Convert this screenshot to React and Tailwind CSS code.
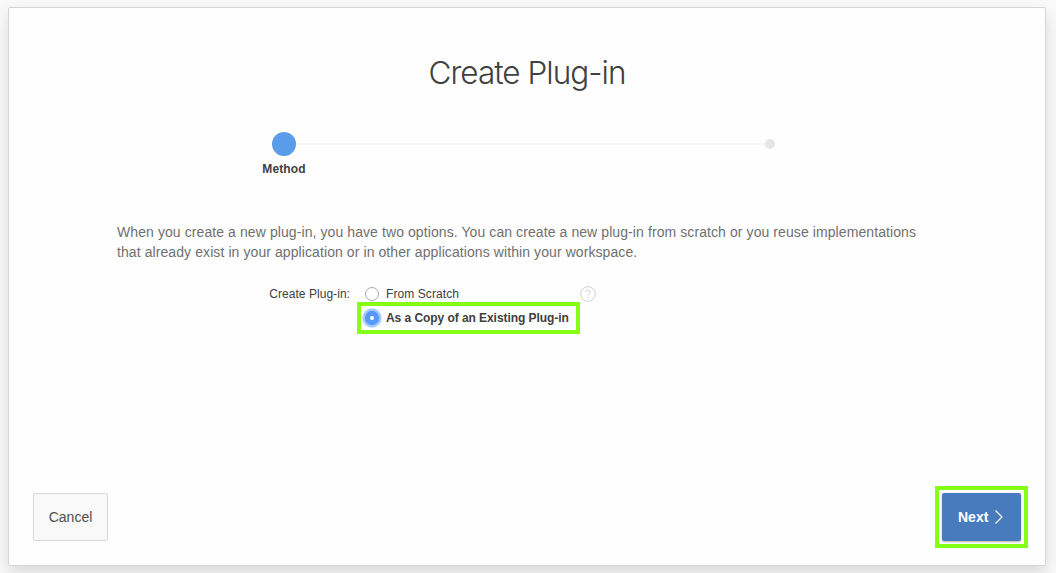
import React from 'react';

function Steps() {
  return (
    <div className="ml-[263px] mt-[38px] flex h-6 w-[503px] items-center">
      <span className="size-6 shrink-0 rounded-full bg-[#5a9bea]" />
      <span className="h-0.5 flex-1 bg-[#f7f7f7]" />
      <span className="size-2.5 shrink-0 rounded-full bg-[#e6e6e6]" />
    </div>
  );
}

function Option({ label, checked }) {
  return (
    <label className={checked
      ? 'flex h-8 w-[223px] items-center border-4 border-[#86ff17] pl-px text-xs font-bold tracking-[-0.06px]'
      : 'flex h-4 items-center pl-[5px] text-xs tracking-[0.08px]'}>
      {checked ? (
        <svg className="mr-1 size-5 shrink-0" viewBox="0 0 20 20">
          <circle cx="10" cy="10" r="9.7" fill="#a5cdfb" />
          <circle cx="10" cy="10" r="7.2" fill="#5897fb" />
          <circle cx="10" cy="10" r="2" fill="#fff" />
        </svg>
      ) : (
        <svg className="mr-1 size-5 shrink-0" viewBox="0 0 20 20">
          <circle cx="10" cy="10" r="6.5" fill="#fff" stroke="#a8a8a8" />
        </svg>
      )}
      <span className="whitespace-nowrap">{label}</span>
    </label>
  );
}

export default function App() {
  return (
    <div className="h-[573px] w-[1056px] overflow-hidden bg-[#f9f9f9] pl-2 pt-[7px] font-['Liberation_Sans',Arial,sans-serif] text-[#404040]">
      <main className="flex h-[559px] w-[1038px] flex-col rounded-xs border border-[#d5d5d5] bg-[#fefefe] shadow-[0_8px_16px_rgba(0,0,0,0.12)]">
        <h1 className="mt-[45px] h-10 whitespace-nowrap text-center font-['Inter',sans-serif] text-[31.5px] font-light leading-10 tracking-[-0.98px]">Create Plug-in</h1>
        <div className="mt-px"><Steps /></div>
        <div className="ml-[235px] mt-1 w-20 text-center text-xs font-bold leading-[18px] tracking-[0.12px]">Method</div>
        <p className="ml-[108px] mt-[44px] w-[830px] whitespace-nowrap text-sm leading-5 tracking-[0.087px] text-[#707070]">
          When you create a new plug-in, you have two options. You can create a new plug-in from scratch or you reuse implementations<br />
          that already exist in your application or in other applications within your workspace.
        </p>
        <div className="mt-6 flex items-start">
          <span className="w-[341px] text-right text-xs leading-4 tracking-[0.05px]">Create Plug-in:</span>
          <div className="ml-[7px] w-[223px]">
            <Option label="From Scratch" />
            <Option label="As a Copy of an Existing Plug-in" checked />
          </div>
          <svg className="size-4" viewBox="0 0 16 16" fill="none" stroke="#cfcfcf">
            <circle cx="8" cy="8" r="7.3" />
            <path d="M5.9 6.4c0-1.4.9-2.1 2.1-2.1s2.1.8 2.1 1.8c0 1.6-2.1 1.7-2.1 3.5M8 10.8v1.2" />
          </svg>
        </div>
        <footer className="mb-[17px] mt-auto flex items-center justify-between pl-6 pr-[17px]">
          <button className="h-12 w-[75px] rounded-xs border border-[#d8d8d8] bg-[#f9f9f9] text-sm text-[#505050]">Cancel</button>
          <div className="flex h-[62px] w-[93px] items-center justify-center border-4 border-[#86ff17]">
            <button className="flex h-12 w-[79px] items-center rounded-xs bg-[#477bbd] pl-4 text-sm font-bold text-white shadow-[0_1px_2px_rgba(0,0,0,0.3)]">
              Next
              <svg className="ml-[3px] size-4" viewBox="0 0 16 16" fill="none" stroke="#fff" strokeWidth="1.2">
                <path d="M4.5 1.5 11 8l-6.500 6.500" />
              </svg>
            </button>
          </div>
        </footer>
      </main>
    </div>
  );
}
